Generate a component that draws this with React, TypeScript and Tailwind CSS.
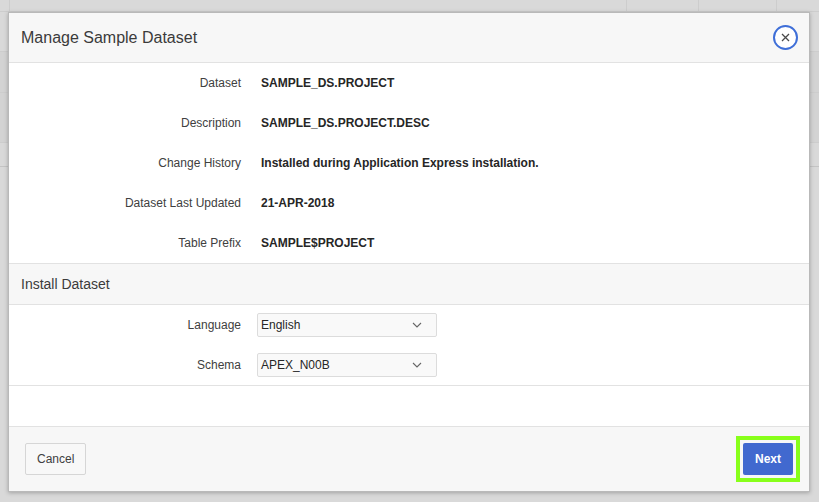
import React from 'react';

const details = [
    { label: 'Dataset', value: 'SAMPLE_DS.PROJECT' },
    { label: 'Description', value: 'SAMPLE_DS.PROJECT.DESC' },
    { label: 'Change History', value: 'Installed during Application Express installation.' },
    { label: 'Dataset Last Updated', value: '21-APR-2018' },
    { label: 'Table Prefix', value: 'SAMPLE$PROJECT' },
];

const Chevron = () => (
    <svg width="10" height="6" viewBox="0 0 10 6" fill="none">
        <path d="M1 1l4 4 4-4" stroke="#666" strokeWidth="1.1" />
    </svg>
);

const SelectBox = ({ value }: { value: string }) => (
    <div className="w-[180px] h-6 flex items-center justify-between pl-[3px] pr-[14px] bg-[#f9f9f9] border border-[#dcdcdc] rounded-[2px] text-[12px] text-[#262626]">
        <span>{value}</span>
        <Chevron />
    </div>
);

const App = () => {
    return (
        <div
            className="relative w-[819px] h-[502px] bg-[#d9d9d9] overflow-hidden"
            style={{ fontFamily: '"Liberation Sans", Arial, sans-serif' }}
        >
            {/* background page behind the dialog */}
            <div className="flex flex-col">
                <div className="flex h-[12px] border-b border-[#cdcdcd]">
                    <div className="w-[10px] border-r border-[#cdcdcd]" />
                    <div className="w-[617px] border-r border-[#cdcdcd]" />
                    <div className="w-[72px] border-r border-[#cdcdcd]" />
                    <div className="w-[78px] border-r border-[#cdcdcd]" />
                    <div className="flex-1" />
                </div>
                <div className="h-[40px] border-b border-[#cdcdcd]" />
                <div className="h-[41px] border-b border-[#cdcdcd] bg-[#d3d3d3]" />
                <div className="h-[50px] border-b border-[#cdcdcd] bg-[#d3d3d3]" />
                <div className="h-[24px] border-b border-[#c4c4c4]" />
            </div>

            {/* dialog */}
            <div className="absolute left-[8px] top-[12px] w-[802px] bg-white border border-[#b9b9b9] shadow-[0_1px_4px_rgba(0,0,0,0.25)] flex flex-col">
                <div className="h-[50px] bg-[#f7f7f7] border-b border-[#e2e2e2] flex items-center justify-between pl-[12px] pr-[11px]">
                    <h1 className="text-[16px] text-[#3b3b3b]">Manage Sample Dataset</h1>
                    <button className="w-[25px] h-[25px] rounded-full bg-white border-2 border-[#3f6fd8] flex items-center justify-center">
                        <svg width="9" height="9" viewBox="0 0 9 9">
                            <path d="M1 1l7 7M8 1l-7 7" stroke="#4a4a4a" strokeWidth="1.3" />
                        </svg>
                    </button>
                </div>

                <div className="flex flex-col">
                    {details.map((row) => (
                        <div key={row.label} className="h-10 flex items-center text-[12px]">
                            <div className="w-[232px] text-right text-[#404040]">{row.label}</div>
                            <div className="pl-5 font-bold text-[#262626]">{row.value}</div>
                        </div>
                    ))}
                </div>

                <div className="h-[42px] bg-[#f7f7f7] border-y border-[#e2e2e2] flex items-center px-[12px]">
                    <h2 className="text-[14px] text-[#3b3b3b]">Install Dataset</h2>
                </div>

                <div className="flex flex-col border-b border-[#e2e2e2]">
                    <div className="h-10 flex items-center text-[12px]">
                        <div className="w-[232px] text-right text-[#404040]">Language</div>
                        <div className="pl-4">
                            <SelectBox value="English" />
                        </div>
                    </div>
                    <div className="h-10 flex items-center text-[12px]">
                        <div className="w-[232px] text-right text-[#404040]">Schema</div>
                        <div className="pl-4">
                            <SelectBox value="APEX_N00B" />
                        </div>
                    </div>
                </div>

                <div className="h-[40px]" />

                <div className="h-[65px] bg-[#f7f7f7] border-t border-[#e2e2e2] flex items-center justify-between pl-[16px] pr-[9px]">
                    <button className="h-8 px-[11px] text-[12px] text-[#404040] bg-[#f8f8f8] border border-[#d6d6d6] rounded-[2px]">
                        Cancel
                    </button>
                    <div className="border-4 border-[#88ff1a] p-[3px]">
                        <button className="h-8 w-[50px] text-[12px] font-bold text-white bg-[#4169cf] rounded-[2px]">
                            Next
                        </button>
                    </div>
                </div>
            </div>
        </div>
    );
};

export default App;
